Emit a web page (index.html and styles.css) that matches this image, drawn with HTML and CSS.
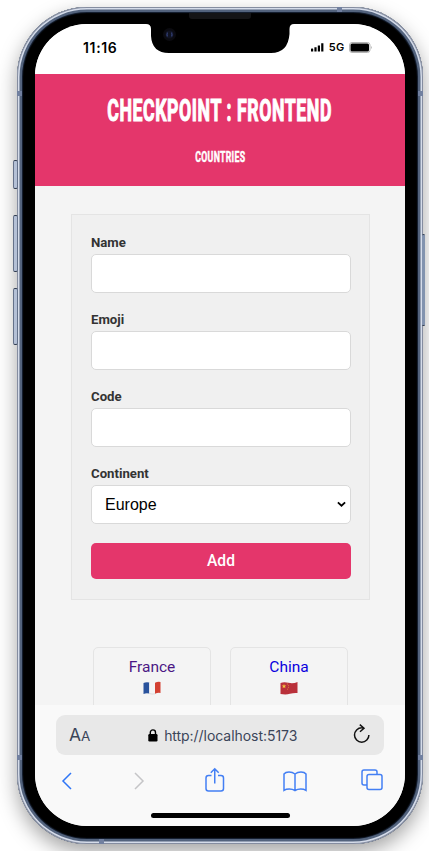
FILE: index.html
```html
<!DOCTYPE html>
<html lang="en">
<head>
<meta charset="utf-8">
<title>Countries</title>
<link rel="stylesheet" href="styles.css">
</head>
<body>
<div class="stage">
  <div class="phone">
    <i class="key key-mute"></i><i class="key key-up"></i><i class="key key-down"></i><i class="key key-power"></i>
    <i class="band band-tl"></i><i class="band band-tr"></i><i class="band band-bl"></i><i class="band band-br"></i><i class="band band-top"></i><i class="band band-bottom"></i>
    <i class="speaker"></i>
    <div class="screen">
      <svg class="notch" viewBox="0 0 148 30" width="148" height="30"><path d="M0 0H148Q143.500 0 143.500 5V10Q142 29 125 29H23Q6 29 5 12V5Q5 0 0 0Z" fill="#000"/><circle cx="23.500" cy="10.500" r="6.500" fill="#0b0b10"/><circle cx="23.500" cy="10.500" r="4" fill="#101322"/><path d="M21.500 8.500q-1 2 0 4M25.500 8.500q1 2 0 4" stroke="#303c70" stroke-width="1.300" fill="none"/></svg>
      <div class="status">
        <span class="time">11:16</span>
        <span class="signals">
          <svg width="13" height="9" viewBox="0 0 13 9"><path d="M0 6.100q0-.6.600-.6h1q.6 0 .6.600V8.500H0zM3.400 4.200h2.200v4.300H3.400zM6.800 2.400h2.200v6.100H6.800zM10.200.300h2.200v8.200h-2.200z"/></svg>
          <span class="net">5G</span>
          <svg width="23" height="11" viewBox="0 0 23 11"><rect x=".5" y=".5" width="20.500" height="10" rx="2.500" fill="none" stroke="#b5b5b5"/><rect x="1.500" y="1.500" width="18.500" height="8" rx="1.500"/><path d="M22 3.800q1 1.700 0 3.400z" fill="#777"/></svg>
        </span>
      </div>
      <header class="top">
        <h1><span>CHECKPOINT : FRONTEND</span></h1>
        <p><span>COUNTRIES</span></p>
      </header>
      <main>
        <form class="form">
          <label>Name<input type="text"></label>
          <label>Emoji<input type="text"></label>
          <label>Code<input type="text"></label>
          <label>Continent<span class="select">Europe<svg width="9" height="7" viewBox="0 0 9 7"><path d="M.9 1.300L4.500 4.700L8.100 1.300" fill="none" stroke="#000" stroke-width="1.800"/></svg></span></label>
          <button type="button">Add</button>
        </form>
        <div class="cards">
          <a class="card visited">France
            <svg width="18" height="14" viewBox="0 0 18 14"><path d="M.5 2Q3 .8 6.300 1.500V12.500Q3 11.800.5 13Z" fill="#29529c"/><path d="M6.300 1.500Q9 2.500 12 1.800V12.800Q9 13.500 6.300 12.500Z" fill="#f5f5f5"/><path d="M6.300 12.500Q9 13.500 12 12.800" fill="none" stroke="#ccc" stroke-width=".6"/><path d="M12 1.800Q15 .2 17.500 1V12Q15 11.300 12 12.800Z" fill="#d34132"/></svg></a>
          <a class="card">China
            <svg width="18" height="14" viewBox="0 0 18 14"><path d="M.5 2Q4 .6 8.500 1.800T17.500 1V12Q14 11.600 10 12.800T.5 13Z" fill="#b9303a"/><path d="M4 3l.6 1.500 1.700.1-1.300 1 .4 1.600L4 6.300 2.600 7.200 3 5.600 1.700 4.600l1.700-.1z" fill="#f4c63d"/><path d="M7 3h.8M8.200 4.700h.8M8.200 6.600h.8M7 8.200h.8" stroke="#e4a13a" stroke-width=".8"/></svg></a>
        </div>
      </main>
      <footer class="browser">
        <div class="address">
          <span class="aa">A<small>A</small></span>
          <span class="url"><svg width="10" height="13" viewBox="0 0 10 13"><rect x=".3" y="5" width="9.200" height="7.500" rx="1.200"/><path d="M2.300 6V3.500a2.600 2.600 0 0 1 5.200 0V6" fill="none" stroke="#000" stroke-width="1.400"/></svg><b>http://localhost:5173</b></span>
          <svg class="reload" width="17" height="20" viewBox="0 0 17 20"><path d="M10.200 4Q9.500 3.800 8.700 3.800A7.200 7.200 0 1 0 15.900 11M6.800.6L11 4.200L7 7.800" fill="none" stroke="#111" stroke-width="1.500"/></svg>
        </div>
        <nav class="tools">
          <svg width="12" height="20" viewBox="0 0 12 20"><path d="M10 2L2 10L10 18" stroke="#2f76f6"/></svg>
          <svg width="12" height="20" viewBox="0 0 12 20"><path d="M2 2L10 10L2 18" stroke="#c5c5c7"/></svg>
          <svg class="share" width="20" height="26" viewBox="0 0 20 26"><path d="M6.500 8.500H3.500Q1 8.500 1 11V21.500Q1 24 3.500 24H16Q18.500 24 18.500 21.500V11Q18.500 8.500 16 8.500H13M9.750 16.500V2M5.800 5.700L9.750 1.800L13.700 5.700"/></svg>
          <svg width="24" height="22" viewBox="0 0 24 22"><path d="M12 4Q9.500 2 6 2T1 4V20.300Q3 19 6.300 19T12 20.500Q14.500 19 17.700 19T23 20.300V4Q21.500 2 18 2T12 4V20.500"/></svg>
          <svg width="22" height="22" viewBox="0 0 22 22"><rect x="6" y="5.500" width="15" height="15" rx="2"/><path d="M6 16H3Q1 16 1 14V3Q1 1 3 1H14Q16 1 16 3V5.500"/></svg>
        </nav>
        <i class="home"></i>
      </footer>
    </div>
  </div>
</div>
</body>
</html>
```
FILE: styles.css
```css
* { box-sizing: border-box; }
body { margin: 0; background: #fff; font-family: Roboto, sans-serif; overflow: hidden; }
.stage { position: relative; width: 429px; height: 851px; padding: 7px 6px 7px 17px; overflow: hidden; }
.phone {
  position: relative; width: 406px; height: 837px; padding: 17px 18px 18px; border-radius: 70px;
  background: #000;
  box-shadow: inset 0 0 0 1px #858da0, inset 0 0 0 2.5px #d5dcea, inset 0 0 0 5px #53637d, inset 0 0 1px 6px #172235, 0 8px 20px rgba(0,0,0,.36);
}
.screen {
  position: relative; display: flex; flex-direction: column; width: 370px; height: 802px;
  border-radius: 52px; overflow: hidden; background: #f4f4f4;
}
.speaker { position: absolute; left: 172px; top: 6px; width: 62px; height: 6px; border-radius: 0 0 3px 3px; background: #141416; }
.notch { position: absolute; left: 111px; top: 0; }
.key { position: absolute; left: -4px; width: 5px; border: 1px solid #64718a; border-top-color: #303c50; border-bottom-color: #303c50; border-radius: 2px; background: #b4c0d6; }
.key-mute { top: 153px; height: 29px; }
.key-up { top: 208px; height: 57px; }
.key-down { top: 281px; height: 57px; }
.key-power { left: 405px; top: 227px; width: 3px; height: 92px; background: #8293af; border-left: 0; border-right: 0; }
.band { position: absolute; width: 5px; height: 5px; background: #7180a0; }
.band-tl { left: 0; top: 84px; }
.band-tr { right: 0; top: 84px; }
.band-bl { left: 0; top: 748px; }
.band-br { right: 0; top: 748px; }
.band-top { left: 320px; top: 0; }
.band-bottom { left: 82px; bottom: 0; }

.status { flex: none; display: flex; justify-content: space-between; height: 50px; padding: 15px 33px 0 48px; background: #fff; }
.time { font: 600 14px/18px Inter, sans-serif; letter-spacing: .65px; }
.signals { display: flex; align-items: center; height: 16px; gap: 4.5px; }
.net { font: 600 11px/14px Inter, sans-serif; letter-spacing: .3px; }

.top { flex: none; height: 112px; background: #e4366b; color: #fff; text-align: center; padding-top: 17px; }
.top h1, .top p { display: flex; justify-content: center; margin: 0; white-space: nowrap; }
.top h1 { font: 700 31px/40px Roboto, sans-serif; }
.top h1 span { letter-spacing: 1px; transform: scaleX(.571); -webkit-text-stroke: 1.2px #fff; }
.top p { margin-top: 16px; font: 700 15.5px/20px Roboto, sans-serif; }
.top p span { letter-spacing: .5px; transform: scaleX(.565); -webkit-text-stroke: .5px #fff; }

main { flex: 1; min-height: 0; overflow: hidden; padding: 28px 35px 0 36px; }
.form { width: 299px; height: 386px; padding: 18px 18.5px 0 19px; border: 1px solid #e4e4e4; background: #f0f0f0; }
label { display: block; height: 77px; color: #333; font-size: 13.2px; line-height: 20px; font-weight: 700; }
input, .select { display: flex; align-items: center; justify-content: space-between; width: 260px; height: 39px; margin: 1px 0 0; padding: 0 4px 0 13px; border: 1px solid #d9d9d9; border-radius: 5px; background: #fff; }
.select { font: 400 16px/20px "Liberation Sans", sans-serif; color: #000; }
button { display: block; width: 260px; height: 36px; margin-top: 2px; padding: 0; border: 0; border-radius: 5px; background: #e4366b; color: #fff; font: 500 15.6px/36px Roboto, sans-serif; }
.cards { display: flex; gap: 19px; margin: 47px 0 0 22px; }
.card { display: flex; flex-direction: column; align-items: center; width: 118px; height: 100px; padding-top: 8.6px; border: 1px solid #e4e4e4; border-radius: 5px; color: #0b00de; font-size: 15.5px; line-height: 21px; }
.card svg { margin-top: 3.4px; }
.visited { color: #4b1784; }

.browser { flex: none; height: 121px; padding: 10px 21px 0; background: #f9f9f9; }
.address { display: flex; align-items: center; justify-content: space-between; height: 40px; padding: 0 14px 0 13px; border-radius: 9px; background: #e8e8e8; color: #3b4559; }
.aa { padding-top: 1px; font: 400 17.5px/20px Inter, sans-serif; }
.aa small { font-size: 13.5px; }
.url { display: flex; align-items: center; gap: 6px; padding: 1px 0 0 2px; font: 400 14px/20px Inter, sans-serif; }
.url svg { fill: #000; }
.url b { font-weight: 400; letter-spacing: -.05px; }
.reload { margin-top: -2px; }
.tools { display: grid; grid-template-columns: 73px 75px 80px 78px 22px; justify-items: center; align-items: center; height: 54px; margin-top: -1px; }
.tools svg { fill: none; stroke: #437ff4; stroke-width: 1.5; }
.tools svg:nth-child(1) { justify-self: start; margin-left: 5px; }
.tools svg:nth-child(2) { justify-self: start; margin-left: 4px; }
.tools svg:nth-child(3) { justify-self: start; margin: -2px 0 0 1px; }
.tools svg:nth-child(4) { justify-self: start; margin-left: -1.5px; }
.tools svg:nth-child(5) { justify-self: end; margin: -2px 1px 0 0; }
.home { display: block; width: 139px; height: 5px; margin: 5px auto 0; border-radius: 3px; background: #000; }
```
